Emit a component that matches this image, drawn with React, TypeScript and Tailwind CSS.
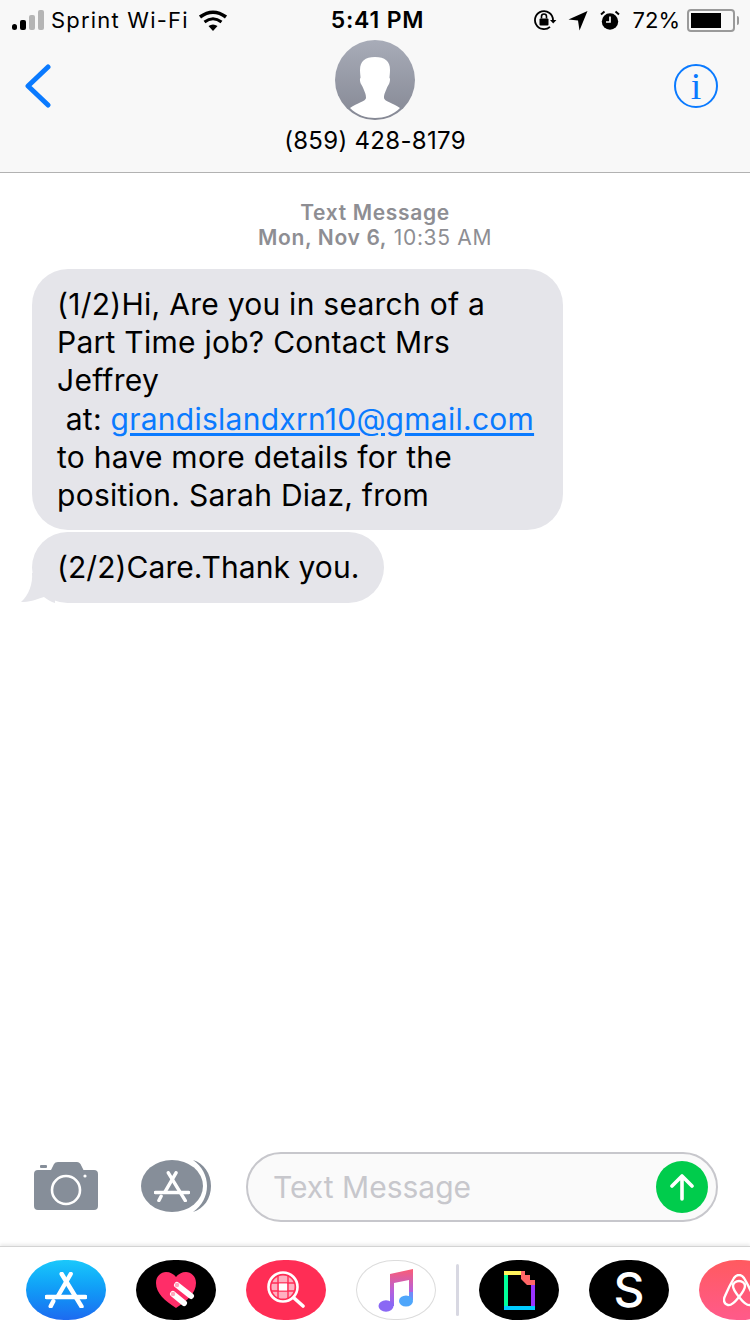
import type { ReactNode } from "react";

const appStoreGlyph = (
  <>
    <path d="M16.7 2 L36.5 34.5" />
    <path d="M25.7 2 L13 24" />
    <path d="M8.3 29.3 L5.7 34.3" />
    <path d="M1.5 25 H40.5" />
  </>
);

function StatusBar() {
  return (
    <div className="grid h-10 grid-cols-[1fr_auto_1fr] items-center pl-3 pr-[11px] text-[22px] leading-none text-black">
      <div className="flex items-center">
        <div className="flex items-end gap-[3px]">
          <span className="h-[6px] w-[5px] rounded-full bg-black" />
          <span className="h-[10px] w-[6px] rounded-[2px] bg-black" />
          <span className="h-[15px] w-[6px] rounded-[2px] bg-[#b5b5b5]" />
          <span className="h-[20px] w-[6px] rounded-[2px] bg-[#b5b5b5]" />
        </div>
        <span className="ml-[7px] tracking-[1.2px]">Sprint Wi-Fi</span>
        <svg className="ml-[9px]" width="30" height="21" viewBox="0 0 30 21">
          <path d="M10.5 16 Q15 13 19.5 16 L15 21 Z" fill="#000" />
          <path d="M6.5 12 Q15 5.5 23.5 12" stroke="#000" strokeWidth="3" fill="none" />
          <path d="M2 7 Q15 -2.5 28 7" stroke="#000" strokeWidth="3.6" fill="none" />
        </svg>
      </div>
      <span className="ml-[4px] text-[23px] font-semibold tracking-[0.8px]">5:41 PM</span>
      <div className="flex items-center justify-self-end">
        <svg width="24" height="22" viewBox="0 0 24 22">
          <path d="M20 11 A9 9 0 1 0 17 17.8" stroke="#000" strokeWidth="1.8" fill="none" />
          <path d="M17 11 L23.4 11 L20.2 14.5 Z" fill="#000" />
          <rect x="6.5" y="9.5" width="9" height="7" rx="1" fill="#000" />
          <path d="M8.5 9.5 V7.5 A2.5 2.5 0 0 1 13.5 7.5 V9.5" stroke="#000" strokeWidth="1.6" fill="none" />
        </svg>
        <svg className="ml-[11px]" width="20" height="21" viewBox="0 0 20 21">
          <path d="M19.5 1 L11.5 20.5 L10 10.5 L0.5 9.5 Z" fill="#000" />
        </svg>
        <svg className="ml-[12px]" width="20" height="21" viewBox="0 0 20 21">
          <circle cx="10" cy="11.5" r="8.2" fill="#000" />
          <path d="M10 6.5 V12 H6" stroke="#f8f8f8" strokeWidth="1.7" fill="none" />
          <path d="M1 4.5 L4.5 1.5 M19 4.5 L15.5 1.5" stroke="#000" strokeWidth="2" />
        </svg>
        <span className="ml-[13px]">72%</span>
        <div className="ml-[7px] flex h-[23px] w-[48px] items-center rounded-[4px] border-2 border-[#9a9a9a] p-[2px]">
          <div className="h-[15px] w-[30px] bg-black" />
        </div>
        <div className="ml-[2px] h-[9px] w-[2px] rounded-r-full bg-[#9a9a9a]" />
      </div>
    </div>
  );
}

function Header() {
  return (
    <header className="h-[173px] border-b border-[#b2b2b2] bg-[#f8f8f8]">
      <StatusBar />
      <div className="grid grid-cols-[1fr_auto_1fr] items-start px-[25px]">
        <svg className="mt-[24px]" width="26" height="44" viewBox="0 0 26 44">
          <path d="M23 3 L3 22 L23 41" stroke="#0a7aff" strokeWidth="5" strokeLinecap="round" strokeLinejoin="round" fill="none" />
        </svg>
        <div className="flex flex-col items-center">
          <div className="h-[80px] w-[80px] overflow-hidden rounded-full bg-gradient-to-b from-[#a8acb8] to-[#858894]">
            <svg width="80" height="80" viewBox="0 0 80 80">
              <path
                d="M40 17 C30 17 25 21 25 30 C25 33 25.5 36 25.5 38 C24.5 38 25 42 26 44 C27 46 28 47 28.5 49 C30 53 31 54 31 58 C31 61 22 63 15 68 C22 75 31 78 40 78 C49 78 58 75 65 68 C58 63 49 61 49 58 C49 54 50 53 51.5 49 C52 47 53 46 54 44 C55 42 55.5 38 54.5 38 C54.5 36 55 33 55 30 C55 21 50 17 40 17 Z"
                fill="#fff"
              />
            </svg>
          </div>
          <span className="mt-[5px] text-[24px] leading-[32px] tracking-[0.3px] text-black">(859) 428-8179</span>
        </div>
        <div className="mr-[7px] mt-[24px] flex h-[44px] w-[44px] items-center justify-center justify-self-end rounded-full border-2 border-[#0a7aff] pb-[1px] font-['Liberation_Serif',serif] text-[38px] leading-none text-[#0a7aff]">
          i
        </div>
      </div>
    </header>
  );
}

function Bubble({ children, tail }: { children: ReactNode; tail?: boolean }) {
  return (
    <div className="relative w-fit rounded-[36px] bg-[#e5e5ea] px-[25px] py-[16px] text-[30px] leading-[38.2px] tracking-[0.26px] text-black">
      {children}
      {tail && (
        <svg className="absolute bottom-0 left-[-11px]" width="34" height="30" viewBox="0 0 34 30">
          <path d="M11 0 C12 10 8 22 0 29 C8 29 14 27 23 24 C26 26 30 29 34 30 L34 0 Z" fill="#e5e5ea" />
        </svg>
      )}
    </div>
  );
}

function Conversation() {
  return (
    <main className="flex-1 pl-8">
      <div className="pr-8 pt-[27px] text-center text-[21px] leading-[25px] tracking-[0.66px] text-[#8e8e93]">
        <div className="font-semibold">Text Message</div>
        <div>
          <span className="font-semibold">Mon, Nov 6,</span> 10:35 AM
        </div>
      </div>
      <div className="mt-[19px] flex flex-col gap-[2px]">
        <Bubble>
          <div className="w-[481px]">
            (1/2)Hi, Are you in search of a
            <br />
            Part Time job? Contact Mrs
            <br />
            Jeffrey
            <br />
            &nbsp;at: <span className="text-[#0a7aff] underline underline-offset-[3px]">grandislandxrn10@gmail.com</span>
            <br />
            to have more details for the
            <br />
            position. Sarah Diaz, from
          </div>
        </Bubble>
        <Bubble tail>
          <div className="relative pb-[1px] tracking-[0.06px]">(2/2)Care.Thank you.</div>
        </Bubble>
      </div>
    </main>
  );
}

function Composer() {
  return (
    <div className="flex h-[94px] items-start pl-[34px] pr-8">
      <svg className="mt-[10px]" width="64" height="48" viewBox="0 0 64 48">
        <path
          d="M4 8 H17 L20 2 Q21 0 24 0 H43 Q45 0 46.5 2 L49.5 8 H60 Q64 8 64 12 V44 Q64 48 60 48 H4 Q0 48 0 44 V12 Q0 8 4 8 Z"
          fill="#868e99"
        />
        <rect x="6" y="3" width="7" height="3" rx="1" fill="#868e99" />
        <circle cx="32" cy="28" r="14" fill="none" stroke="#fff" strokeWidth="2.6" />
        <circle cx="51" cy="14" r="1.6" fill="#fff" />
      </svg>
      <div className="relative ml-[43px] mt-[8px] h-[52px] w-[70px]">
        <svg className="absolute left-0 top-0" width="70" height="52" viewBox="0 0 70 52">
          <path d="M52 0 C63 3 70 14 70 26 C70 38 63 49 52 52 C61 46 66 36 66 26 C66 16 61 6 52 0 Z" fill="#868e99" />
        </svg>
        <div className="relative flex h-[52px] w-[62px] items-center justify-center rounded-[31px/26px] bg-[#868e99]">
          <svg width="36" height="31" viewBox="0 0 42 36" fill="none" stroke="#fff" strokeWidth="4" strokeLinecap="round">
            {appStoreGlyph}
          </svg>
        </div>
      </div>
      <div className="ml-[35px] flex h-[70px] w-[472px] items-center justify-between rounded-[35px] border-2 border-[#c7c7cc] bg-[#fafafa] pl-[25px] pr-[8px] text-[30px] text-[#c7c7cc]">
        <span>Text Message</span>
        <div className="flex h-[52px] w-[52px] items-center justify-center rounded-full bg-[#00cc4c]">
          <svg width="24" height="28" viewBox="0 0 24 28" fill="none" stroke="#fff" strokeWidth="3.6" strokeLinecap="round" strokeLinejoin="round">
            <path d="M12 26 V3 M2 13 L12 3 L22 13" />
          </svg>
        </div>
      </div>
    </div>
  );
}

function AppPill({ className, children }: { className: string; children: ReactNode }) {
  return <div className={`flex h-[60px] w-[80px] shrink-0 items-center justify-center rounded-[38px/30px] ${className}`}>{children}</div>;
}

function AppStrip() {
  return (
    <div className="flex h-[88px] items-start overflow-hidden border-t border-[#d4d4d4] pl-[26px] pt-[13px] shadow-[0_-2px_3px_rgba(0,0,0,0.08)]">
      <div className="flex items-center gap-[30px]">
        <AppPill className="bg-gradient-to-b from-[#1bc8fb] to-[#1d6af0]">
          <svg width="42" height="36" viewBox="0 0 42 36" fill="none" stroke="#fff" strokeWidth="4.4" strokeLinecap="round">
            {appStoreGlyph}
          </svg>
        </AppPill>
        <AppPill className="bg-black">
          <svg width="40" height="36" viewBox="0 0 40 36">
            <path d="M20 36 C9 29 0 21 0 11 C0 4 5 0 10 0 C14 0 18 2 20 5 C22 2 26 0 30 0 C35 0 40 4 40 11 C40 21 31 29 20 36 Z" fill="#ff2d68" />
            <path d="M21 13 L35 24 M17 22 L28 31" stroke="#fff" strokeWidth="6" strokeLinecap="round" />
            <circle cx="21" cy="13" r="2.2" fill="#ffa6bd" />
            <circle cx="17" cy="22" r="2.2" fill="#ffa6bd" />
          </svg>
        </AppPill>
        <AppPill className="bg-[#ff2d55]">
          <svg width="38" height="38" viewBox="0 0 38 38" fill="none">
            <circle cx="16" cy="16" r="14.5" stroke="#fff" strokeWidth="2.6" />
            <circle cx="16" cy="16" r="11.5" fill="#ffb0c1" />
            <path d="M4 12 H28 M4 20 H28 M11 4 V28 M21 4 V28" stroke="#ff2d55" strokeWidth="1.4" />
            <rect x="12" y="12.5" width="8" height="7" fill="#fff" />
            <path d="M27 27 L36 35" stroke="#fff" strokeWidth="3.6" strokeLinecap="round" />
          </svg>
        </AppPill>
        <AppPill className="border border-[#dcdcdc] bg-white">
          <svg width="36" height="44" viewBox="0 0 36 44">
            <defs>
              <linearGradient id="music" x1="0" y1="0" x2="0" y2="1">
                <stop offset="0" stopColor="#fb5c74" />
                <stop offset="0.6" stopColor="#b660dc" />
                <stop offset="1" stopColor="#8a68f4" />
              </linearGradient>
            </defs>
            <path d="M12 6 L35 1 V32 H31 V12 L16 15 V38 H12 Z" fill="url(#music)" />
            <ellipse cx="8" cy="38" rx="7.5" ry="5.8" fill="#8a68f4" />
            <path d="M31 24 H35 V32 H31 Z" fill="#6f8cf8" />
            <ellipse cx="28" cy="33" rx="7" ry="5.6" fill="#4fa6fb" />
          </svg>
        </AppPill>
        <div className="mx-[-10px] h-[52px] w-[3px] rounded-full bg-[#d8d8e2]" />
        <AppPill className="bg-black">
          <svg width="31" height="39" viewBox="0 0 31 39">
            <rect x="0" y="0" width="17" height="4" fill="#fff35c" />
            <rect x="0" y="4" width="4" height="31" fill="#00ff99" />
            <rect x="0" y="35" width="31" height="4" fill="#00ccff" />
            <rect x="27" y="14" width="4" height="21" fill="#9933ff" />
            <path d="M17 0 H21 V4 H26 V9 H31 V14 H23 L17 8 Z" fill="#ff6666" />
          </svg>
        </AppPill>
        <AppPill className="bg-black">
          <span className="text-[48px] font-medium leading-none text-white">S</span>
        </AppPill>
        <AppPill className="bg-gradient-to-b from-[#ff5a5f] to-[#ff5a8a]">
          <svg width="32" height="33" viewBox="0 0 32 33" fill="none" stroke="#fff" strokeWidth="2.4" strokeLinejoin="round">
            <path d="M16 23 C12 18 10 14 10 12 C10 9 13 7 16 7 C19 7 22 9 22 12 C22 14 20 18 16 23 C12 28 8 32 5 31 C1 30 0 26 2 22 C5 15 8 9 11 4 C13 1 15 1 16 1 C17 1 19 1 21 4 C24 9 27 15 30 22 C32 26 31 30 27 31 C24 32 20 28 16 23 Z" />
          </svg>
        </AppPill>
      </div>
    </div>
  );
}

export default function App() {
  return (
    <div className="flex h-[1334px] w-[750px] flex-col overflow-hidden bg-white font-['Inter','Liberation_Sans',sans-serif]">
      <Header />
      <Conversation />
      <Composer />
      <AppStrip />
    </div>
  );
}
